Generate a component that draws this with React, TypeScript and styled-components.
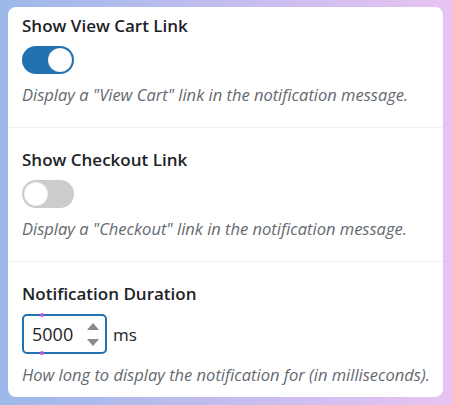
import React from 'react'
import styled, { createGlobalStyle } from 'styled-components'

const GlobalStyle = createGlobalStyle`
  html, body {
    margin: 0;
    padding: 0;
  }
  body {
    font-family: "Open Sans", "Noto Sans", sans-serif;
    background: #fff;
  }
`

const Frame = styled.div`
  width: 452px;
  height: 405px;
  box-sizing: border-box;
  padding: 7px 9px 8px 8px;
  background: linear-gradient(90deg, #9cb9ea 0%, #c3bdee 50%, #e7c3f3 100%);
`

const Panel = styled.div`
  height: 100%;
  background: #fff;
  border-radius: 8px;
  overflow: hidden;
`

const Section = styled.div<{ $first?: boolean; $last?: boolean }>`
  padding: ${p => (p.$first ? '7px' : '20px')} 14px 0;
  height: ${p => (p.$first ? '121px' : '134px')};
  box-sizing: border-box;
  border-bottom: ${p => (p.$last ? 'none' : '1px solid #f0f0f1')};
`

const Title = styled.h3`
  margin: 0;
  font-size: 17px;
  line-height: 24px;
  font-weight: 600;
  color: #1d2327;
`

const Description = styled.p`
  margin: 10px 0 0;
  font-size: 16.5px;
  line-height: 22px;
  font-style: italic;
  color: #646970;
  white-space: nowrap;
`

const Track = styled.div<{ $on?: boolean }>`
  margin-top: 8px;
  width: 52px;
  height: 28px;
  box-sizing: border-box;
  border-radius: 14px;
  padding: 2px;
  display: flex;
  justify-content: ${p => (p.$on ? 'flex-end' : 'flex-start')};
  background: ${p => (p.$on ? '#2271b1' : '#cccccc')};
`

const Knob = styled.div`
  width: 24px;
  height: 24px;
  box-sizing: border-box;
  border-radius: 50%;
  background: #fff;
  border: 1px solid rgba(0, 0, 0, 0.06);
`

const Field = styled.div`
  margin-top: 8px;
  display: flex;
  align-items: center;
  gap: 6px;
`

const NumberBox = styled.div`
  position: relative;
  width: 85px;
  height: 40px;
  box-sizing: border-box;
  border: 2px solid #2271b1;
  border-radius: 5px;
  display: flex;
  align-items: center;
  padding: 0 6px 0 8px;
`

const NumberValue = styled.span`
  flex: 1;
  font-size: 18px;
  color: #1d2327;
`

const Spinner = styled.div`
  display: flex;
  flex-direction: column;
  align-items: center;
  gap: 9px;
`

const Arrow = styled.span<{ $down?: boolean }>`
  width: 0;
  height: 0;
  border-left: 6px solid transparent;
  border-right: 6px solid transparent;
  ${p =>
    p.$down
      ? 'border-top: 7px solid #8a8a8a;'
      : 'border-bottom: 7px solid #8a8a8a;'}
`

const Handle = styled.span<{ $bottom?: boolean }>`
  position: absolute;
  left: 16px;
  ${p => (p.$bottom ? 'bottom: -3px;' : 'top: -3px;')}
  width: 4px;
  height: 4px;
  border-radius: 50%;
  background: #c74fe0;
`

const Unit = styled.span`
  font-size: 17px;
  color: #1d2327;
`

const App: React.FC = () => {
  return (
    <>
      <GlobalStyle />
      <Frame>
        <Panel>
          <Section $first>
            <Title>Show View Cart Link</Title>
            <Track $on>
              <Knob />
            </Track>
            <Description>
              Display a "View Cart" link in the notification message.
            </Description>
          </Section>
          <Section>
            <Title>Show Checkout Link</Title>
            <Track>
              <Knob />
            </Track>
            <Description>
              Display a "Checkout" link in the notification message.
            </Description>
          </Section>
          <Section $last>
            <Title>Notification Duration</Title>
            <Field>
              <NumberBox>
                <Handle />
                <NumberValue>5000</NumberValue>
                <Spinner>
                  <Arrow />
                  <Arrow $down />
                </Spinner>
                <Handle $bottom />
              </NumberBox>
              <Unit>ms</Unit>
            </Field>
            <Description>
              How long to display the notification for (in milliseconds).
            </Description>
          </Section>
        </Panel>
      </Frame>
    </>
  )
}

export default App
